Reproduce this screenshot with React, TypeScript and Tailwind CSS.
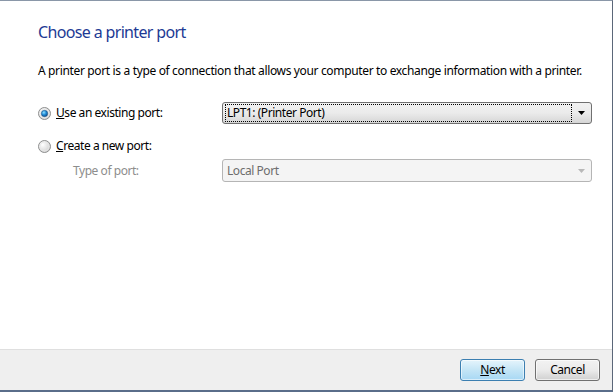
import React from "react";

const font = { fontFamily: '"Noto Sans", "Open Sans", sans-serif' };

function Radio({ checked }: { checked: boolean }) {
  return (
    <svg width="13" height="13" viewBox="0 0 13 13" className="shrink-0">
      <defs>
        <radialGradient id="rbg" cx="0.35" cy="0.35" r="0.8">
          <stop offset="0" stopColor="#ffffff" />
          <stop offset="1" stopColor="#c9c9c9" />
        </radialGradient>
        <radialGradient id="rdot" cx="0.4" cy="0.35" r="0.7">
          <stop offset="0" stopColor="#8fe0ff" />
          <stop offset="0.5" stopColor="#1f8ad6" />
          <stop offset="1" stopColor="#0c4a8c" />
        </radialGradient>
      </defs>
      <circle cx="6.5" cy="6.5" r="6" fill="url(#rbg)" stroke="#8e8f8f" strokeWidth="1" />
      <circle cx="6.5" cy="6.5" r="4.5" fill="none" stroke="#e8e8e8" strokeWidth="0.8" />
      {checked && <circle cx="6.5" cy="6.5" r="3.2" fill="url(#rdot)" stroke="#21507a" strokeWidth="0.5" />}
    </svg>
  );
}

function Arrow({ color }: { color: string }) {
  return (
    <svg width="7" height="4" viewBox="0 0 7 4">
      <path d="M0 0 H7 L3.5 4 Z" fill={color} />
    </svg>
  );
}

export default function App() {
  return (
    <div
      className="w-[613px] h-[392px] flex flex-col bg-white border-t border-t-[#8a97a8] border-r border-r-[#5b6779] border-b-2 border-b-[#5a6d8a] text-[12px] text-black tracking-[-0.45px]"
      style={font}
    >
      <div className="flex-1 flex flex-col pl-[38px]">
        <div className="mt-[21px] text-[16px] leading-[21px] text-[#1d3a94] tracking-[-0.65px]">Choose a printer port</div>
        <div className="mt-[20px] leading-[16px] whitespace-nowrap tracking-[-0.35px]">
          A printer port is a type of connection that allows your computer to exchange information with a printer.
        </div>
        <div className="mt-[23px] flex items-center h-[22px]">
          <div className="flex items-center w-[184px]">
            <Radio checked />
            <span className="ml-[5px]">
              <span className="underline">U</span>se an existing port:
            </span>
          </div>
          <div className="w-[370px] h-[22px] rounded-[3px] border border-[#707070] bg-gradient-to-b from-[#f2f2f2] via-[#ebebeb] to-[#d6d6d6] flex items-center pl-[2px] pr-[2px]">
            <div className="flex-1 h-[18px] border border-dotted border-black flex items-center pl-[1px] leading-none">
              LPT1: (Printer Port)
            </div>
            <div className="w-[17px] flex justify-center pl-[2px]">
              <Arrow color="#000" />
            </div>
          </div>
        </div>
        <div className="mt-[15px] flex items-center h-[14px]">
          <Radio checked={false} />
          <span className="ml-[5px]">
            <span className="underline">C</span>reate a new port:
          </span>
        </div>
        <div className="mt-[6px] flex items-center h-[23px]">
          <div className="w-[184px] pl-[35px] text-[#8d8d8d]">Type of port:</div>
          <div className="w-[370px] h-[23px] rounded-[3px] border border-[#b5b5b5] bg-[#f4f4f4] flex items-center pl-[4px] pr-[2px] text-[#6d6d6d]">
            <div className="flex-1">Local Port</div>
            <div className="w-[17px] flex justify-center pl-[2px]">
              <Arrow color="#b8b8b8" />
            </div>
          </div>
        </div>
      </div>
      <div className="h-[41px] border-t border-t-[#dfdfdf] bg-[#efefef] flex items-center justify-end gap-[10px] pr-[12px]">
        <button className="w-[65px] h-[22px] rounded-[3px] border border-[#3c7fb1] bg-gradient-to-b from-[#e5f4fc] via-[#c4e5f6] to-[#a7d8f4] text-[12px] leading-none shadow-[inset_0_0_0_1px_#ffffff90]">
          <span className="underline">N</span>ext
        </button>
        <button className="w-[65px] h-[22px] rounded-[3px] border border-[#707070] bg-gradient-to-b from-[#f2f2f2] via-[#ebebeb] to-[#d0d0d0] text-[12px] leading-none shadow-[inset_0_0_0_1px_#ffffffa0]">
          Cancel
        </button>
      </div>
    </div>
  );
}
